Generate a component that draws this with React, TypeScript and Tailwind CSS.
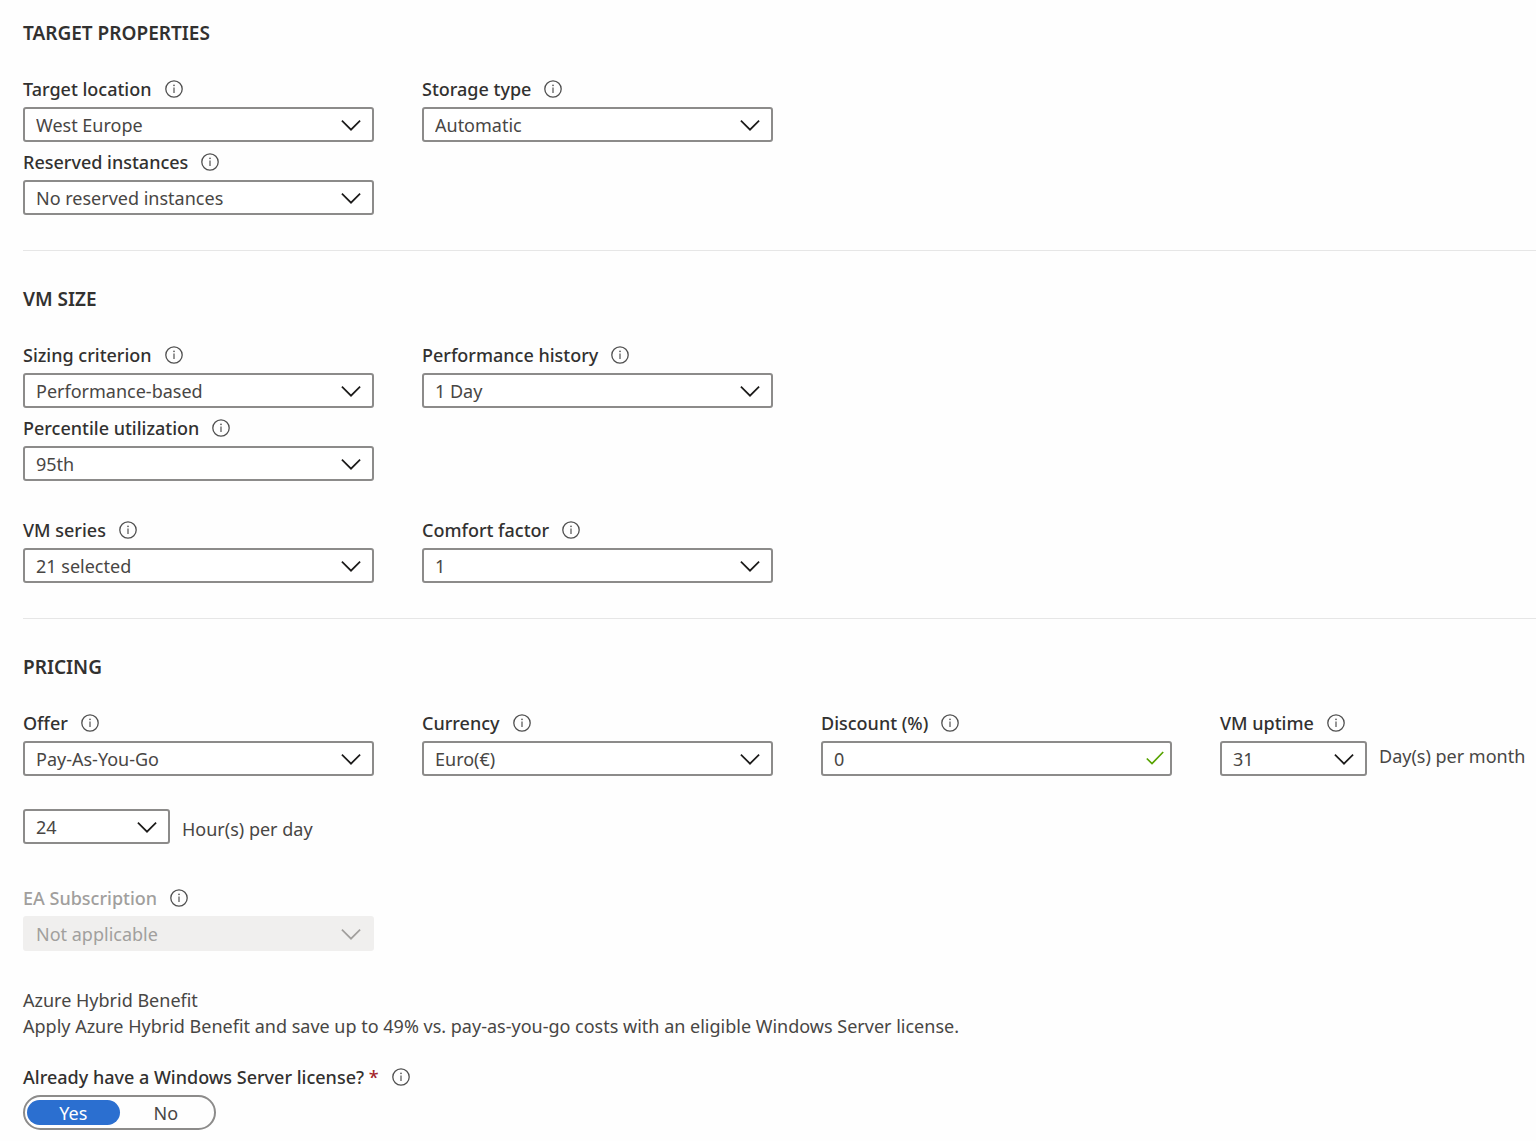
import { useId, useState, type ReactNode } from "react";

function InfoButton({ about }: { about: string }) {
  return (
    <button type="button" aria-label={`More information about ${about}`} className="size-[18px] shrink-0 text-[#505050]">
      <svg viewBox="0 0 18 18" className="size-full" fill="none" stroke="currentColor">
        <circle cx="9" cy="9" r="8.2" strokeWidth="1.3" />
        <path d="M9 7.4v5.6" strokeWidth="1.2" />
        <circle cx="9" cy="5.4" r="0.8" fill="currentColor" stroke="none" />
      </svg>
    </button>
  );
}

function FieldLabel({ htmlFor, text, muted = false }: { htmlFor: string; text: string; muted?: boolean }) {
  return (
    <div className="flex h-9 items-center gap-[13px]">
      <label htmlFor={htmlFor} className={muted ? "font-medium text-[#a19f9d]" : "font-medium"}>
        {text}
      </label>
      <InfoButton about={text} />
    </div>
  );
}

type DropdownProps = { id?: string; label?: string; options: string[]; disabled?: boolean };

function Dropdown({ id, label, options, disabled = false }: DropdownProps) {
  return (
    <div className="relative w-full">
      <select
        id={id}
        aria-label={label}
        disabled={disabled}
        className="block h-[35px] w-full appearance-none rounded-[3px] border-2 border-[#8c8b8a] bg-white pr-10 pl-[11px] text-[#484644] disabled:border-[#f0efee] disabled:bg-[#f0efee] disabled:text-[#a19f9d] disabled:opacity-100"
      >
        {options.map((option) => (
          <option key={option}>{option}</option>
        ))}
      </select>
      <svg
        viewBox="0 0 20 12"
        className={
          disabled
            ? "pointer-events-none absolute top-3 right-[13px] h-3 w-5 text-[#a19f9d]"
            : "pointer-events-none absolute top-3 right-[13px] h-3 w-5 text-[#1b1a19]"
        }
        fill="none"
        stroke="currentColor"
        strokeWidth="1.7"
      >
        <path d="M0.900 1.600 10 10.700l9.100-9.100" />
      </svg>
    </div>
  );
}

function SelectField({ label, options, disabled = false }: { label: string; options: string[]; disabled?: boolean }) {
  const id = useId();
  return (
    <div className="w-[351px]">
      <FieldLabel htmlFor={id} text={label} muted={disabled} />
      <Dropdown id={id} options={options} disabled={disabled} />
    </div>
  );
}

function DiscountField() {
  const id = useId();
  return (
    <div className="w-[351px]">
      <FieldLabel htmlFor={id} text="Discount (%)" />
      <div className="relative">
        <input
          id={id}
          type="text"
          inputMode="numeric"
          defaultValue="0"
          className="block h-[35px] w-full rounded-[3px] border-2 border-[#8c8b8a] bg-white pr-10 pl-[11px] text-[#484644]"
        />
        <svg viewBox="0 0 18 14" className="pointer-events-none absolute top-2.5 right-2 h-3.5 w-[18px] text-[#57a300]" fill="none" stroke="currentColor" strokeWidth="1.7">
          <path d="M0.800 7.500 6 12.600 17.200 1" />
        </svg>
      </div>
    </div>
  );
}

function UptimeField() {
  const id = useId();
  return (
    <div>
      <FieldLabel htmlFor={id} text="VM uptime" />
      <div className="flex items-start gap-3">
        <div className="w-[147px]">
          <Dropdown id={id} options={["31", "30", "29", "28"]} />
        </div>
        <span className="leading-[30px] whitespace-nowrap text-[#484644]">Day(s) per month</span>
      </div>
    </div>
  );
}

function Row({ children }: { children: ReactNode }) {
  return <div className="flex flex-wrap gap-x-12 gap-y-0.5">{children}</div>;
}

function Section({ title, children }: { title: string; children: ReactNode }) {
  return (
    <section className="border-b border-[#e6e6e6] pt-9 pb-[35px] first:pt-[21px] last:border-b-0 last:pb-0">
      <h2 className="mb-[26px] text-[19px] leading-6 font-semibold">{title}</h2>
      {children}
    </section>
  );
}

function LicenseToggle() {
  const labelId = useId();
  const [value, setValue] = useState("Yes");
  return (
    <div role="radiogroup" aria-labelledby={labelId} className="mt-5">
      <div className="flex h-9 items-center gap-[13px]">
        <span id={labelId} className="font-medium">
          Already have a Windows Server license? <span className="text-[#a4262c]">*</span>
        </span>
        <InfoButton about="Windows Server license" />
      </div>
      <div className="relative flex h-[35px] w-[193px] items-center rounded-full border-2 border-[#8c8b8a] px-0.5">
        {["Yes", "No"].map((option) => (
          <label
            key={option}
            className="flex h-[25px] flex-1 cursor-pointer items-center justify-center rounded-full text-[#484644] has-checked:bg-[#2b6fd0] has-checked:text-white"
          >
            <input
              type="radio"
              name="license"
              value={option}
              checked={value === option}
              onChange={() => setValue(option)}
              className="sr-only"
            />
            {option}
          </label>
        ))}
      </div>
    </div>
  );
}

export default function App() {
  return (
    <main className="min-h-screen bg-[#fefefe] pl-[23px] font-['Noto_Sans','Open_Sans',sans-serif] text-[18px] leading-[26px] text-[#323130]">
      <Section title="TARGET PROPERTIES">
        <Row>
          <SelectField label="Target location" options={["West Europe"]} />
          <SelectField label="Storage type" options={["Automatic"]} />
        </Row>
        <div className="mt-0.5">
          <SelectField label="Reserved instances" options={["No reserved instances"]} />
        </div>
      </Section>

      <Section title="VM SIZE">
        <Row>
          <SelectField label="Sizing criterion" options={["Performance-based"]} />
          <SelectField label="Performance history" options={["1 Day"]} />
        </Row>
        <div className="mt-0.5 mb-[31px]">
          <SelectField label="Percentile utilization" options={["95th"]} />
        </div>
        <Row>
          <SelectField label="VM series" options={["21 selected"]} />
          <SelectField label="Comfort factor" options={["1"]} />
        </Row>
      </Section>

      <Section title="PRICING">
        <Row>
          <SelectField label="Offer" options={["Pay-As-You-Go"]} />
          <SelectField label="Currency" options={["Euro(€)"]} />
          <DiscountField />
          <UptimeField />
        </Row>
        <div className="mt-[33px] mb-9 flex items-end gap-3">
          <div className="w-[147px]">
            <Dropdown label="Hours per day" options={["24"]} />
          </div>
          <span className="leading-[30px] text-[#484644]">Hour(s) per day</span>
        </div>
        <SelectField label="EA Subscription" options={["Not applicable"]} disabled />
        <div className="mt-9 text-[#484644]">
          <p>Azure Hybrid Benefit</p>
          <p>Apply Azure Hybrid Benefit and save up to 49% vs. pay-as-you-go costs with an eligible Windows Server license.</p>
        </div>
        <LicenseToggle />
      </Section>
    </main>
  );
}
